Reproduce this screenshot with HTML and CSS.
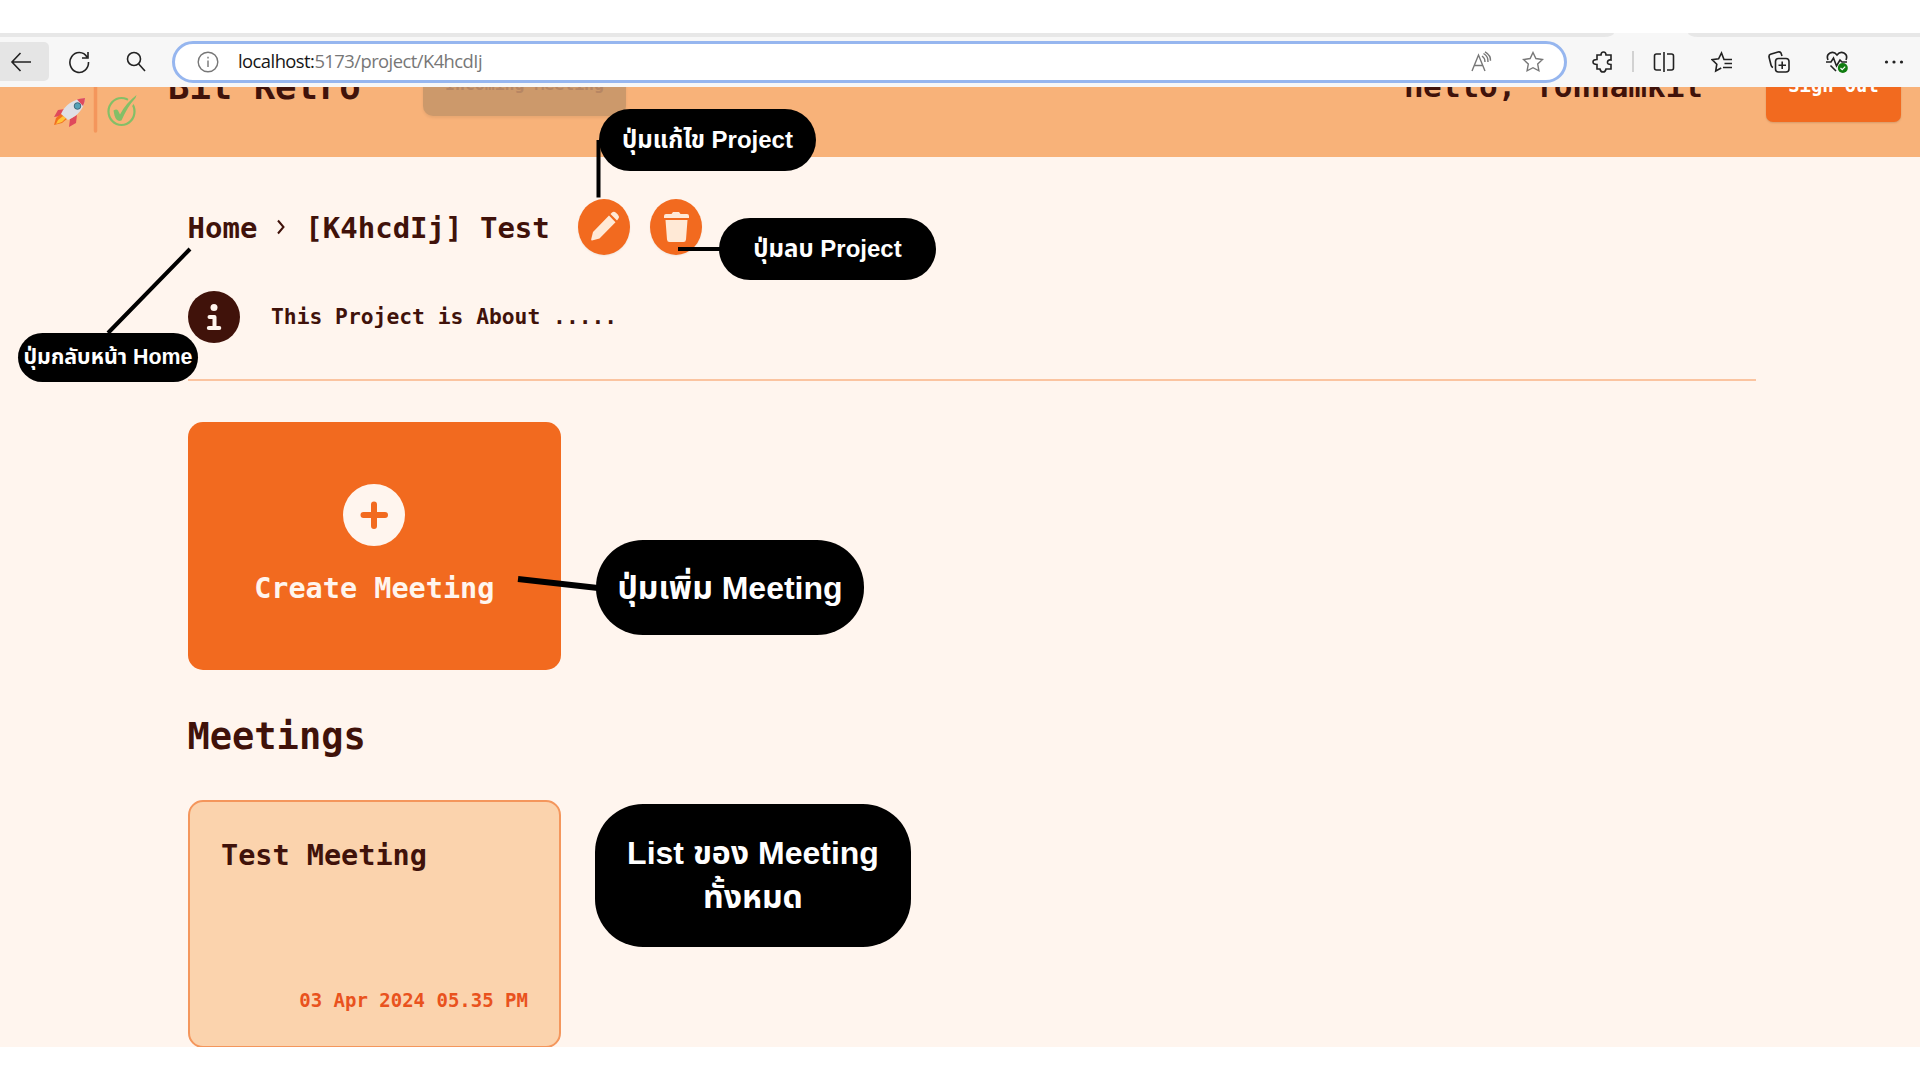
FILE: index.html
```html
<!DOCTYPE html>
<html lang="th">
<head>
<meta charset="utf-8">
<title>Bit Retro</title>
<link rel="stylesheet" href="styles.css">
</head>
<body>
<div class="screen">
  <header class="browser">
    <div class="tabs"><i class="tab-left"></i><i class="tab-right"></i></div>
    <div class="toolbar">
      <span class="back"><svg width="24" height="24" viewBox="0 0 24 24"><path d="M22 12H3M11.500 3L3 12l8.500 9"/></svg></span>
      <svg class="reload" width="24" height="24" viewBox="0 0 24 24"><path d="M20 7A9.300 10 0 1 0 21.500 12M21 2v6h-6"/></svg>
      <svg class="search" width="20" height="22" viewBox="0 0 20 22"><circle cx="8" cy="8" r="6.500"/><path d="M12.700 13L19 20"/></svg>
      <div class="address">
        <svg class="info" width="22" height="22" viewBox="0 0 22 22"><circle cx="11" cy="11" r="9.800"/><path d="M11 9.500v6.500M11 5.800v1.600"/></svg>
        <span class="url"><b>localhost:</b>5173/project/K4hcdIj</span>
        <svg class="read" width="22" height="22" viewBox="0 0 22 22"><path d="M1 20L7.500 4 14 20M3.500 14.500h8M11 5q3 2 3 6M12.500 2.500q5 3 4.500 8.500M14 .8q6 3.500 5.500 9"/></svg>
        <svg class="star" width="22" height="22" viewBox="0 0 22 22"><path d="M11 1.500l2.900 6 6.600 1-4.800 4.600 1.200 6.700L11 16.700l-5.900 3.100 1.200-6.700L1.500 8.500l6.600-1z"/></svg>
      </div>
      <div class="tools">
        <svg width="22" height="22" viewBox="0 0 22 22"><path d="M5 4h4q0-3 2.500-3T14 4h5v5q-3-.5-3.500 2t3.500 2.500V18h-5q-.5 3-3 3T8 18H5v-4.500q-4 0-4-2.500t4-2.500z"/></svg>
        <i class="divider"></i>
        <svg width="22" height="22" viewBox="0 0 22 22"><path d="M8 3H3.500Q1.500 3 1.500 5v12q0 2 2 2H8M14 3h4.500q2 0 2 2v12q0 2-2 2H14M11 1v20"/></svg>
        <svg width="22" height="22" viewBox="0 0 22 22"><path d="M14 8.500h-1L10.500 2 7.600 7.800 1 8.600l4.800 4.600L4.700 20l5.500-3M13 8.500h8M13.500 12.500H21M12 16.500h9"/></svg>
        <svg width="22" height="22" viewBox="0 0 22 22"><rect x="7.500" y="7.500" width="13.500" height="13.500" rx="3"/><path d="M14.200 10.500v7.500M10.500 14.200H18M5 16.500Q3.500 16 3 14L1 6q-.3-2 1.500-2.700L10 1q2-.4 3 1l1 3"/></svg>
        <svg width="22" height="22" viewBox="0 0 22 22"><path d="M2 9Q0 4 4 2t7 2q3-4 7-2t2 7M0 11h5l2.500-4 3 8 3.500-6 2 2h5M4.500 14.500L10 20"/><circle class="ok" cx="16.800" cy="17" r="5"/><path class="tick" d="M14.500 17l1.700 1.700 3-3"/></svg>
        <svg class="dots" width="22" height="22" viewBox="0 0 22 22"><circle cx="3.500" cy="11" r="1.600"/><circle cx="11" cy="11" r="1.600"/><circle cx="18.500" cy="11" r="1.600"/></svg>
      </div>
    </div>
  </header>

  <main class="page">
    <nav class="banner">
      <svg class="logo" width="90" height="50" viewBox="0 0 90 50">
        <path d="M45.500 0v44" stroke="#f4965c" stroke-width="3.500" stroke-linecap="round"/>
        <g transform="translate(1 -1)">
          <path d="M14 23l-7 1-4 7 7-1zM26 29l-1 8-7 4 1-8z" fill="#df4a5c"/>
          <path d="M11 27L5 32 3 39l8-2 6-5z" fill="#f2701f"/>
          <path d="M12 30l-5 4-2 4 6-2 4-4z" fill="#ffc43a"/>
          <path d="M10 28Q16 14 34 12q-1 15-17 22z" fill="#dfe0e6"/>
          <path d="M26 13.500q4-1.500 8-1.500 0 4-2 8z" fill="#df4a5c"/>
          <circle cx="26.500" cy="20" r="3.300" fill="#55a2b7" stroke="#41697c"/>
        </g>
        <g transform="translate(4.500 -.5)">
          <ellipse cx="67" cy="25" rx="13" ry="13.500" fill="none" stroke="#84bf67" stroke-width="2.200"/>
          <path d="M63 24l4 6L79 11" fill="none" stroke="#f8b279" stroke-width="7"/>
          <path d="M59 24q3-2 4.500 0l2 4Q71 17 82 8.500l-1 3Q73 20 67 34q-5 2-7-5z" fill="#84bf67"/>
        </g>
      </svg>
      <span class="brand">Bit Retro</span>
      <span class="incoming">Incoming Meeting</span>
      <span class="hello">Hello, Tonnamkit</span>
      <span class="signout">Sign Out</span>
    </nav>

    <section class="content">
      <div class="crumbs">
        <span>Home</span>
        <svg class="chevron" width="10" height="16" viewBox="0 0 10 16"><path d="M2 1.500l5.500 6.500L2 14.500"/></svg>
        <span>[K4hcdIj] Test</span>
        <span class="round edit"><svg width="52" height="56" viewBox="0 0 52 56"><path d="M15 33L31 16.500l6.500 6.800L21.500 39.500 14 41.500q-1 0-.8-1.200zM32.500 15l1.500-1.500q2-1.500 4 .3l2 2q1.800 2 .3 4L39 21.500z"/></svg></span>
        <span class="round"><svg width="52" height="56" viewBox="0 0 52 56"><path d="M14 17q0-2 2-2h5.500l1.500-2h6l1.500 2H37q2 0 2 2v2H14zM15.500 21h22L36 40.500q-.2 2.500-2.500 2.500h-14q-2.300 0-2.500-2.500z"/></svg></span>
      </div>
      <div class="about">
        <svg width="52" height="52" viewBox="0 0 52 52"><circle cx="26" cy="26" r="26" fill="#40120a"/><circle cx="26" cy="16.500" r="3.500" fill="#fff5ee"/><path d="M21.500 26h5v11M20.800 37h10.500" fill="none" stroke="#fff5ee" stroke-width="4" stroke-linecap="round" stroke-linejoin="round"/></svg>
        <span>This Project is About .....</span>
      </div>
      <div class="create">
        <svg width="62" height="62" viewBox="0 0 62 62"><circle cx="31" cy="31" r="31" fill="#fff5ee"/><path d="M31 20.500v21.500M20.500 31h21.500" stroke="#f26a1f" stroke-width="6" stroke-linecap="round"/></svg>
        <span>Create Meeting</span>
      </div>
      <h2>Meetings</h2>
      <article class="meeting">
        <h3>Test Meeting</h3>
        <time>03 Apr 2024 05.35 PM</time>
      </article>
    </section>
  </main>

  <svg class="lines" width="1920" height="1080" viewBox="0 0 1920 1080"><path d="M598.500 140v57.500M678 249h42M190 249L108 333"/><path class="thick" d="M518 579l80 9"/></svg>
  <div class="note edit-note"><span>ปุ่มแก้ไข Project</span></div>
  <div class="note delete-note"><span>ปุ่มลบ Project</span></div>
  <div class="note home-note"><span>ปุ่มกลับหน้า Home</span></div>
  <div class="note add-note"><span>ปุ่มเพิ่ม Meeting</span></div>
  <div class="note list-note"><span>List ของ Meeting<br>ทั้งหมด</span></div>
</div>
</body>
</html>
```
FILE: styles.css
```css
* { box-sizing: border-box; }
body { margin: 0; background: #fff; }
.screen { position: relative; width: 1920px; height: 1080px; overflow: hidden; padding-top: 33px; }
svg { display: block; flex: none; }

.browser { height: 54px; background: #f7f7f7; fill: none; stroke: #222; stroke-width: 1.6; }
.tabs { height: 4px; display: flex; justify-content: space-between; }
.tab-left, .tab-right { background: #e7e7e7; height: 4px; }
.tab-left { width: 1614px; border-bottom-right-radius: 10px 4px; }
.tab-right { width: 232px; border-bottom-left-radius: 10px 4px; }
.toolbar { height: 50px; display: flex; align-items: center; padding-bottom: 1px; }
.back { width: 49px; height: 39px; margin-right: 18px; padding-left: 9px; display: flex; align-items: center; background: #e5e5e5; border-radius: 0 5px 5px 0; }
.back svg { flex: none; }
.reload { margin-right: 35px; }
.search { margin-right: 26px; }
.address { width: 1395px; height: 42px; border: 3px solid #96b6ef; border-radius: 21px; background: #fff; display: flex; align-items: center; padding: 0 20px 0 22px; stroke: #777; stroke-width: 1.4; }
.url { flex: 1; margin-left: 19px; padding-bottom: 1px; font: 18.4px/24px "Open Sans", "Noto Sans", sans-serif; letter-spacing: -.55px; color: #777; }
.url b { font-weight: 400; color: #161616; }
.read { margin-right: 29px; }
.tools { display: flex; align-items: center; justify-content: space-between; width: 313px; margin-left: 25px; }
.divider { width: 2px; height: 21px; background: #d2d2d2; margin: 0 -16px 0 -18px; }
.ok { fill: #107c10; stroke: none; }
.tick { stroke: #fff; stroke-width: 1.2; }
.dots { fill: #222; stroke: none; }

.page { height: 960px; background: #fff5ee; overflow: hidden; font-family: "DejaVu Sans Mono", monospace; font-weight: 700; color: #40120a; }
.banner { height: 70px; background: #f8b279; display: flex; align-items: flex-start; overflow: hidden; }
.logo { margin-left: 50px; }
.brand { margin: -21px 0 0 28px; width: 255px; font-size: 35.6px; line-height: 42px; white-space: nowrap; }
.incoming { width: 203px; height: 58px; margin-top: -29px; padding-top: 17px; border-radius: 10px; background: #cc996b; color: #b78663; font-size: 16.5px; line-height: 20px; text-align: center; box-shadow: 0 2px 3px #0001; }
.hello { margin: -20px 63px 0 auto; font-size: 31px; line-height: 38px; white-space: nowrap; }
.signout { width: 135px; height: 62px; margin: -27px 19px 0 0; padding-top: 15px; border-radius: 7px; background: #f26a1f; color: #fff; font-size: 18.8px; line-height: 22px; text-align: center; box-shadow: 0 1px 2px #0002; }

.content { padding: 41px 164px 0 187.5px; }
.crumbs { height: 58px; display: flex; align-items: center; font-size: 29px; white-space: nowrap; }
.crumbs > span:not(.round) { padding-top: 1px; }
.chevron { margin: 0 19px; fill: none; stroke: #40120a; stroke-width: 2; }
.round { width: 52px; height: 56px; border-radius: 50%; background: #f26a1f; fill: #ffe9d6; margin-left: 20.5px; box-shadow: 0 1px 2px #0001; }
.edit { margin-left: 28px; }
.about { height: 125px; padding-top: 35px; display: flex; align-items: flex-start; gap: 31.5px; border-bottom: 2px solid #fbc4a0; font-size: 21.3px; line-height: 52px; }
.create { width: 373.5px; height: 248px; margin-top: 41px; padding-top: 62px; border-radius: 15px; background: #f26a1f; display: flex; flex-direction: column; align-items: center; gap: 23px; color: #fff5ee; font-size: 28.5px; line-height: 40px; }
h2 { margin: 42px 0 0; font-size: 37px; line-height: 50px; }
.meeting { width: 373.5px; height: 248px; margin-top: 38px; padding: 34px 31px 0 31.5px; border: 2px solid #f4965c; border-radius: 15px; background: #fbd3ad; }
h3 { margin: 0; font-size: 28.5px; line-height: 40px; }
time { display: block; margin-top: 112px; font-size: 19px; line-height: 24px; text-align: right; color: #e9521d; }

.lines { position: absolute; left: 0; top: 0; fill: none; stroke: #000; stroke-width: 4; }
.thick { stroke-width: 6; }
.note { position: absolute; display: flex; align-items: center; justify-content: center; text-align: center; padding-top: 2px; background: #000; color: #fff; font-family: "Liberation Sans", "Noto Sans Thai", sans-serif; font-weight: 700; white-space: nowrap; }
.edit-note { left: 599px; top: 109px; width: 217px; height: 62px; border-radius: 31px; font-size: 24px; }
.delete-note { left: 719px; top: 218px; width: 217px; height: 62px; border-radius: 31px; font-size: 24px; }
.home-note { left: 18px; top: 333px; width: 180px; height: 49px; padding-top: 0; border-radius: 25px; font-size: 21.4px; }
.add-note { left: 596px; top: 540px; width: 268px; height: 95px; border-radius: 47px; font-size: 32px; }
.list-note { left: 595px; top: 803.5px; width: 316px; height: 143.5px; padding-top: 0; border-radius: 48px; font-size: 32px; line-height: 44px; }
```
